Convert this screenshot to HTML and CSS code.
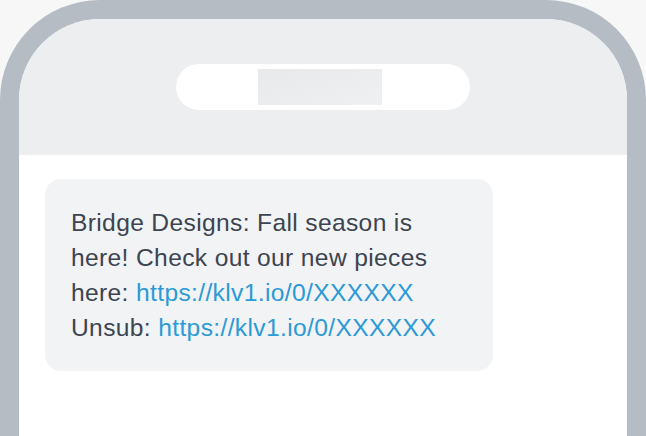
FILE: index.html
```html
<!DOCTYPE html>
<html>
<head>
<meta charset="utf-8">
<link rel="stylesheet" href="styles.css">
</head>
<body>
<div class="phone">
  <div class="header">
    <div class="pill"><div class="pill-box"></div></div>
  </div>
  <div class="screen">
    <div class="bubble">
      <p class="msg">Bridge Designs: Fall season is here! Check out our new pieces here: <a class="link">https://klv1.io/0/XXXXXX</a><br>Unsub: <a class="link">https://klv1.io/0/XXXXXX</a></p>
    </div>
  </div>
</div>
</body>
</html>
```
FILE: styles.css
```css
html, body {
  margin: 0;
  padding: 0;
  background: #f7f7f7;
  overflow: hidden;
}
.phone {
  width: 646px;
  height: 436px;
  box-sizing: border-box;
  border: 19px solid #b6bcc4;
  border-bottom: none;
  border-radius: 100px 100px 0 0;
  background: #ffffff;
  overflow: hidden;
}
.header {
  height: 136px;
  background: #edeef0;
  display: flex;
  align-items: center;
  justify-content: center;
}
.pill {
  width: 294px;
  height: 46px;
  border-radius: 23px;
  background: #ffffff;
  display: flex;
  align-items: center;
  justify-content: center;
}
.pill-box {
  width: 124px;
  height: 36px;
  margin-right: 6px;
  background: linear-gradient(160deg, #e8e9eb, #eff0f2);
}
.screen {
  padding: 24px 0 0 26px;
}
.bubble {
  width: 448px;
  box-sizing: border-box;
  background: #f2f3f5;
  border-radius: 16px;
  padding: 26px 30px 26px 26px;
}
.msg {
  margin: 0;
  font-family: "Liberation Sans", Arial, sans-serif;
  font-size: 24.6px;
  letter-spacing: 0.35px;
  line-height: 35px;
  color: #3c4450;
}
.link {
  color: #2b9ad6;
  text-decoration: none;
}
```
